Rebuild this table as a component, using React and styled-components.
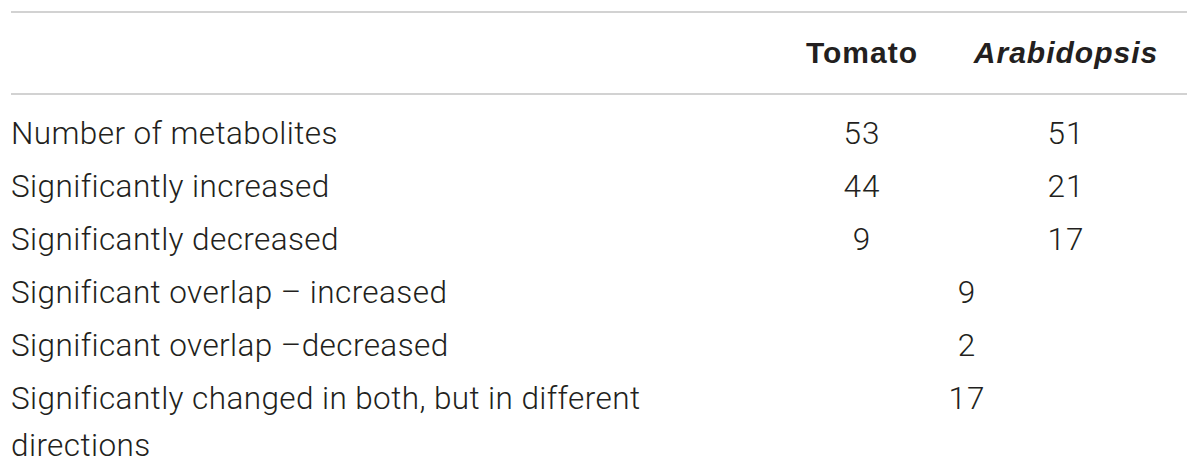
import React from "react";
import styled, { createGlobalStyle } from "styled-components";

const GlobalStyle = createGlobalStyle`
  body {
    margin: 0;
    background: #ffffff;
  }
`;

const Wrapper = styled.div`
  padding: 11px 0 0 11px;
  font-family: Roboto, "Liberation Sans", Arial, sans-serif;
  color: #231f20;
`;

const Table = styled.div`
  width: 1176px;
  border-top: 2px solid #d2d2d2;
`;

const Row = styled.div`
  display: grid;
  grid-template-columns: 752px 198px 210px 16px;
  align-items: start;
  padding: ${(p) => (p.$head ? "0" : "3px 0")};
  height: ${(p) => (p.$head ? "80px" : "auto")};
  border-bottom: ${(p) => (p.$head ? "2px solid #d2d2d2" : "none")};
  margin-bottom: ${(p) => (p.$head ? "12px" : "0")};
`;

const Label = styled.div`
  padding-right: 90px;
  font-size: 31.5px;
  font-weight: 300;
  letter-spacing: 0.4px;
  line-height: 47px;
`;

const Value = styled.div`
  grid-column: ${(p) => (p.$span ? "2 / 4" : "auto")};
  text-align: center;
  font-size: 31.5px;
  font-weight: 300;
  letter-spacing: 1px;
  line-height: 47px;
`;

const HeadCell = styled.div`
  text-align: center;
  font-family: "Liberation Sans", Arial, sans-serif;
  font-size: 30px;
  font-weight: bold;
  font-style: ${(p) => (p.$italic ? "italic" : "normal")};
  letter-spacing: 1px;
  line-height: 80px;
`;

const rows = [
  { label: "Number of metabolites", tomato: "53", arab: "51" },
  { label: "Significantly increased", tomato: "44", arab: "21" },
  { label: "Significantly decreased", tomato: "9", arab: "17" },
  { label: "Significant overlap – increased", both: "9" },
  { label: "Significant overlap –decreased", both: "2" },
  { label: "Significantly changed in both, but in different directions", both: "17" },
];

const App = () => {
  return (
    <Wrapper>
      <GlobalStyle />
      <Table>
        <Row $head>
          <div />
          <HeadCell>Tomato</HeadCell>
          <HeadCell $italic>Arabidopsis</HeadCell>
        </Row>
        {rows.map((r) => (
          <Row key={r.label}>
            <Label>{r.label}</Label>
            {r.both ? (
              <Value $span>{r.both}</Value>
            ) : (
              <>
                <Value>{r.tomato}</Value>
                <Value>{r.arab}</Value>
              </>
            )}
          </Row>
        ))}
      </Table>
    </Wrapper>
  );
};

export default App;
